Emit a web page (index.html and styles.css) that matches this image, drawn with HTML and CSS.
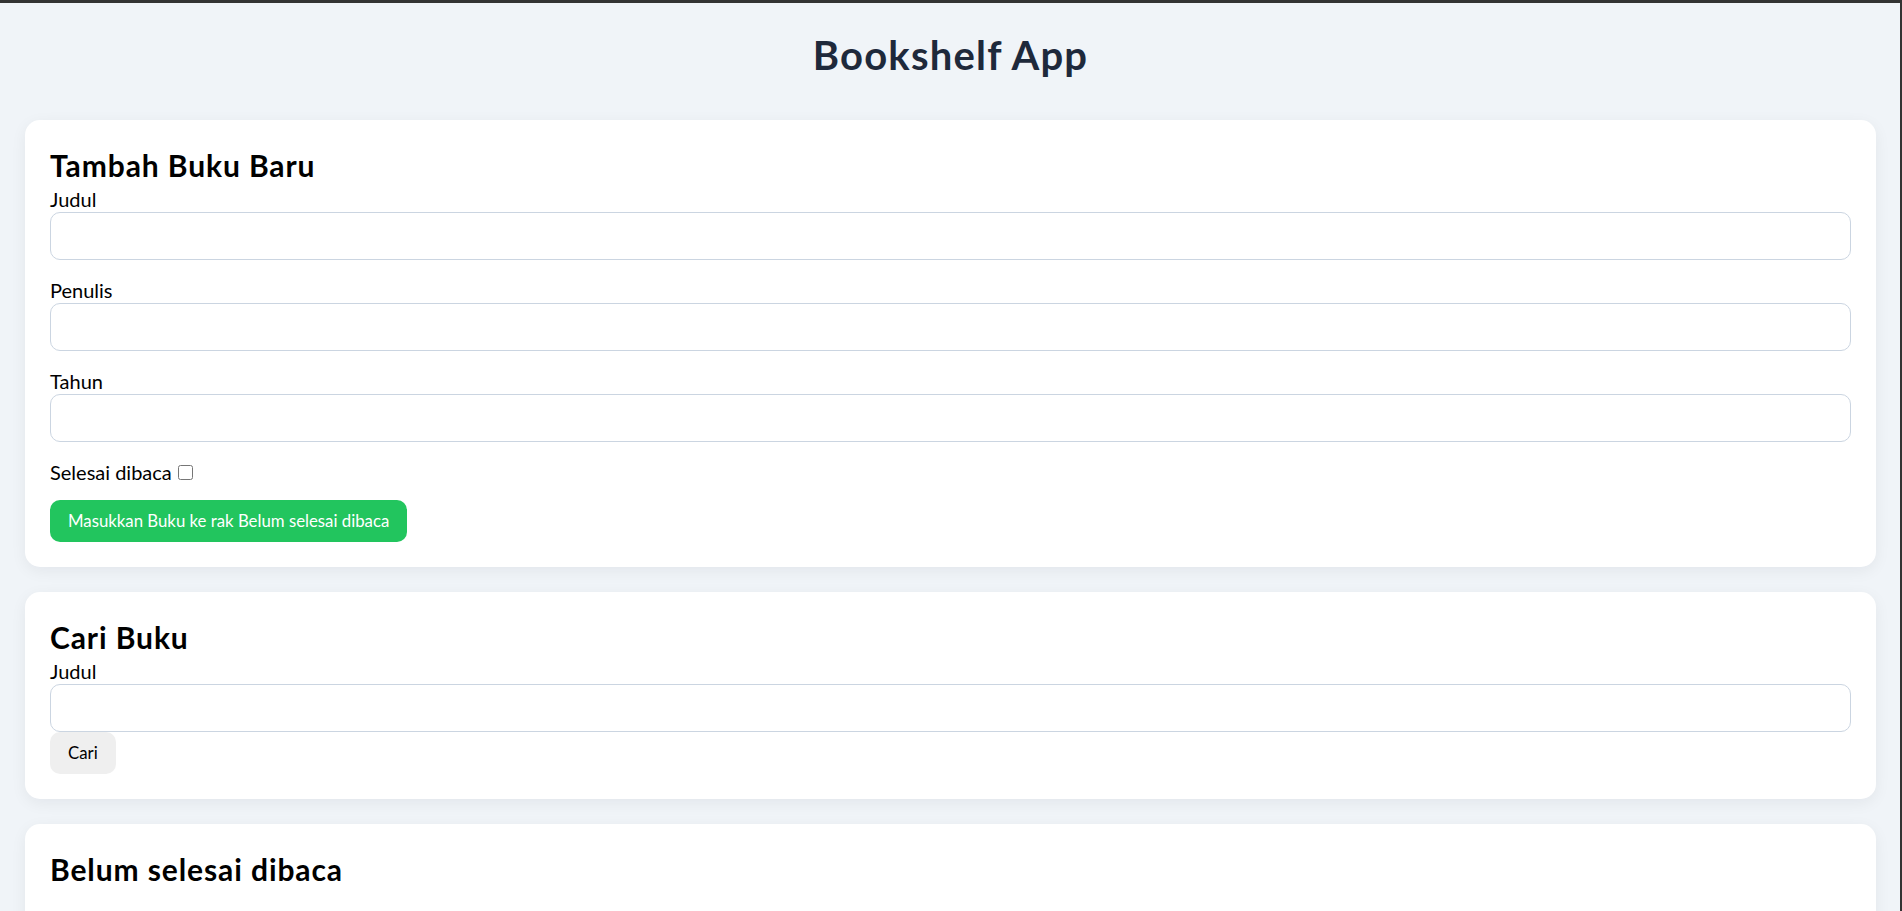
FILE: index.html
```html
<!DOCTYPE html>
<html lang="id">
<head>
<meta charset="utf-8">
<title>Bookshelf App</title>
<link rel="stylesheet" href="styles.css">
</head>
<body>
<div class="page">
  <h1 class="app-title">Bookshelf App</h1>

  <section class="card">
    <h2 class="card-title">Tambah Buku Baru</h2>
    <form class="book-form">
      <div class="field">
        <label class="field-label" for="bookFormTitle">Judul</label>
        <input class="text-input" id="bookFormTitle" type="text">
      </div>
      <div class="field">
        <label class="field-label" for="bookFormAuthor">Penulis</label>
        <input class="text-input" id="bookFormAuthor" type="text">
      </div>
      <div class="field">
        <label class="field-label" for="bookFormYear">Tahun</label>
        <input class="text-input" id="bookFormYear" type="number">
      </div>
      <div class="check-field">
        <label class="field-label" for="bookFormIsComplete">Selesai dibaca</label>
        <input class="check-input" id="bookFormIsComplete" type="checkbox">
      </div>
      <button class="btn btn-primary" type="button">Masukkan Buku ke rak Belum selesai dibaca</button>
    </form>
  </section>

  <section class="card">
    <h2 class="card-title">Cari Buku</h2>
    <form class="search-form">
      <label class="field-label" for="searchBookTitle">Judul</label>
      <input class="text-input" id="searchBookTitle" type="text">
      <button class="btn btn-plain" type="button">Cari</button>
    </form>
  </section>

  <section class="card">
    <h2 class="card-title">Belum selesai dibaca</h2>
    <div class="book-list"></div>
  </section>

  <section class="card">
    <h2 class="card-title">Selesai dibaca</h2>
    <div class="book-list"></div>
  </section>
</div>
</body>
</html>
```

FILE: styles.css
```css
html {
  background: #333333;
}

body {
  margin: 3px 2px 0 0;
  background: #f0f4f8;
  min-height: calc(100vh - 3px);
  font-family: "Lato", "Open Sans", sans-serif;
  color: #000000;
}

.page {
  padding: 25px 24px 25px 25px;
}

.app-title {
  margin: 0 0 38px;
  text-align: center;
  font-size: 40px;
  line-height: 54px;
  font-weight: 700;
  letter-spacing: 0.03em;
  color: #1e293b;
}

.card {
  background: #ffffff;
  border-radius: 15px;
  padding: 25px 25px 25px;
  margin-bottom: 25px;
  box-shadow: 0 4px 16px rgba(15, 23, 42, 0.06);
}

.card-title {
  margin: 0;
  font-size: 30px;
  line-height: 41px;
  font-weight: 700;
  letter-spacing: 0.03em;
}

.field {
  margin-bottom: 17px;
}

.field-label {
  display: block;
  font-size: 20px;
  line-height: 26px;
}

.text-input {
  display: block;
  width: 100%;
  height: 48px;
  box-sizing: border-box;
  margin: 0;
  padding: 0 12px;
  border: 1px solid #cbd5e1;
  border-radius: 10px;
  background: #ffffff;
  font-family: inherit;
  font-size: 20px;
}

.check-field {
  display: flex;
  align-items: center;
  margin-top: 17px;
  margin-bottom: 15px;
}

.check-input {
  width: 15px;
  height: 15px;
  margin: 0 0 0 6px;
}

.btn {
  display: block;
  height: 42px;
  padding: 0 18px;
  border: none;
  border-radius: 10px;
  font-family: inherit;
  font-size: 16.8px;
  line-height: 22px;
  cursor: pointer;
}

.btn-primary {
  background: #22c55e;
  color: #ffffff;
}

.btn-plain {
  background: #efefef;
  color: #000000;
}

.book-list {
  min-height: 60px;
}
```
